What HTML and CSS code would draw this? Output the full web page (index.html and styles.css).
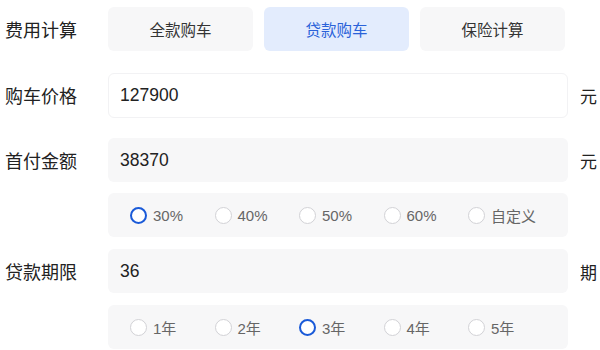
FILE: index.html
```html
<!DOCTYPE html>
<html lang="zh-CN">
<head>
<meta charset="utf-8">
<title>贷款计算</title>
<link rel="stylesheet" href="styles.css">
</head>
<body>
<div class="calc">
  <div class="row row-tabs">
    <div class="label">费用计算</div>
    <div class="tabs">
      <div class="tab">全款购车</div>
      <div class="tab tab-active">贷款购车</div>
      <div class="tab">保险计算</div>
    </div>
  </div>

  <div class="row row-field">
    <div class="label">购车价格</div>
    <div class="field field-white">127900</div>
    <div class="unit">元</div>
  </div>

  <div class="row row-field">
    <div class="label">首付金额</div>
    <div class="field">38370</div>
    <div class="unit">元</div>
  </div>

  <div class="row row-radio">
    <div class="label"></div>
    <div class="radios">
      <div class="radio radio-on"><span class="dot"></span>30%</div>
      <div class="radio"><span class="dot"></span>40%</div>
      <div class="radio"><span class="dot"></span>50%</div>
      <div class="radio"><span class="dot"></span>60%</div>
      <div class="radio"><span class="dot"></span>自定义</div>
    </div>
  </div>

  <div class="row row-radio">
    <div class="label">贷款期限</div>
    <div class="field">36</div>
    <div class="unit">期</div>
  </div>

  <div class="row row-radio">
    <div class="label"></div>
    <div class="radios">
      <div class="radio"><span class="dot"></span>1年</div>
      <div class="radio"><span class="dot"></span>2年</div>
      <div class="radio radio-on"><span class="dot"></span>3年</div>
      <div class="radio"><span class="dot"></span>4年</div>
      <div class="radio"><span class="dot"></span>5年</div>
    </div>
  </div>
</div>
</body>
</html>
```

FILE: styles.css
```css
* { box-sizing: border-box; }
html, body {
  margin: 0;
  padding: 0;
  background: #ffffff;
}
body {
  font-family: "Liberation Sans", "Noto Sans CJK SC", sans-serif;
  color: #222;
}
.calc {
  padding: 7px 0 0 5px;
  width: 600px;
}
.row {
  display: flex;
  align-items: center;
  height: 44px;
}
.row-field { margin-top: 22px; }
.row-field + .row-field { margin-top: 21px; }
.row-radio { margin-top: 11px; }
.row-radio + .row-radio { margin-top: 12px; }
.label {
  width: 103px;
  flex: none;
  font-size: 18px;
  color: #222;
}
.tabs {
  display: flex;
  gap: 11px;
  height: 44px;
}
.tab {
  width: 145px;
  height: 44px;
  border-radius: 6px;
  background: #f7f7f8;
  color: #333;
  font-size: 15.5px;
  display: flex;
  align-items: center;
  justify-content: center;
}
.tab-active {
  background: #e3ecfd;
  color: #2a62d9;
}
.field {
  width: 460px;
  height: 44px;
  flex: none;
  border-radius: 6px;
  background: #f7f7f8;
  font-size: 17.5px;
  color: #222;
  padding-left: 12px;
  display: flex;
  align-items: center;
}
.field-white {
  background: #fff;
  border: 1px solid #f2f2f4;
  padding-left: 11px;
  height: 45px;
}
.unit {
  margin-left: 12px;
  font-size: 17px;
  color: #222;
}
.radios {
  width: 460px;
  height: 44px;
  flex: none;
  border-radius: 6px;
  background: #f7f7f8;
  display: flex;
  align-items: center;
  padding-left: 22px;
}
.radio {
  width: 84.5px;
  flex: none;
  display: flex;
  align-items: center;
  font-size: 15px;
  color: #666;
}
.dot {
  width: 17px;
  height: 17px;
  border-radius: 50%;
  border: 1px solid #d2d2d6;
  background: #fff;
  margin-right: 6px;
  flex: none;
}
.radio-on .dot {
  border: 2.5px solid #1a5ad8;
}
```
